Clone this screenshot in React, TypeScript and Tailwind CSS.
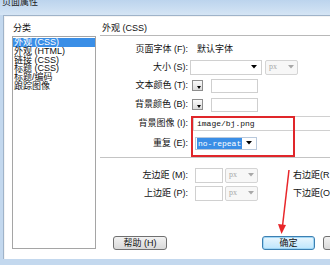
const Arrow = ({ gray }: { gray?: boolean }) => (
  <svg width="6" height="4" viewBox="0 0 6 4" className="shrink-0">
    <path d="M0 0 L6 0 L3 3.5 Z" fill={gray ? "#a8a8a8" : "#000"} />
  </svg>
);

const Swatch = () => (
  <div className="relative w-[11px] h-[11px] border border-[#8d8d8d] bg-gradient-to-b from-[#fafafa] to-[#dcdcdc]">
    <svg width="4" height="3" viewBox="0 0 4 3" className="absolute right-[1px] bottom-[1px]">
      <path d="M0 0 L4 0 L2 3 Z" fill="#000" />
    </svg>
  </div>
);

const PxSelect = () => (
  <div className="w-[33px] h-[15px] border border-[#d4d4d4] bg-[#f7f7f7] rounded-[2px] flex items-center justify-between px-[3px]">
    <span className="text-[8px] text-[#a8a8a8] font-['Liberation_Serif',serif]">px</span>
    <Arrow gray />
  </div>
);

const Row = ({ label, h, children }: { label: string; h: string; children: React.ReactNode }) => (
  <div className={`flex items-center ${h}`}>
    <div className="w-[88px] text-right whitespace-nowrap">{label}</div>
    {children}
  </div>
);

const Btn = ({ children, primary, className }: { children?: React.ReactNode; primary?: boolean; className?: string }) => (
  <div
    className={
      "h-[14px] rounded-[3px] border flex items-center justify-center shrink-0 " +
      (primary
        ? "border-[#3c7fb1] bg-gradient-to-b from-[#eaf6fd] to-[#bee6fd] shadow-[inset_0_0_0_1px_#9fd6f5] "
        : "border-[#707070] bg-gradient-to-b from-[#f2f2f2] to-[#d9d9d9] ") +
      (className ?? "")
    }
  >
    {children}
  </div>
);

export default function App() {
  const items = ["外观 (CSS)", "外观 (HTML)", "链接 (CSS)", "标题 (CSS)", "标题/编码", "跟踪图像"];
  return (
    <div className="relative w-[330px] h-[265px] overflow-hidden bg-[#c3d8ee] flex flex-col text-[9px] leading-none text-[#111] font-['Liberation_Sans','Noto_Sans_CJK_SC',sans-serif]">
      {/* title bar */}
      <div className="h-[15px] shrink-0 bg-gradient-to-b from-[#bcd4ed] to-[#d5e5f5] pl-[2px] overflow-hidden">
        <div className="text-[9px] leading-none -mt-[2px] text-[#1c1c1c]">页面属性</div>
      </div>

      {/* body */}
      <div className="flex ml-[3px] h-[244px] bg-white border-t border-l border-[#9fb3c9] shadow-[inset_1px_1px_0_#f4f4f4]">
        {/* categories */}
        <div className="w-[96px] shrink-0 pl-[8px] pt-[6px] flex flex-col">
          <div className="h-[12px] flex items-center pl-[1px]">分类</div>
          <div className="mt-[2px] w-[84px] h-[213px] border border-[#a5a5a5] pt-[1px]">
            {items.map((t, i) => (
              <div
                key={t}
                className={
                  "h-[8.8px] leading-[9px] pl-[1px] whitespace-nowrap " +
                  (i === 0 ? "bg-[#3a8ee6] text-white" : "")
                }
              >
                {t}
              </div>
            ))}
          </div>
        </div>

        {/* settings */}
        <div className="flex-1 flex flex-col pt-[6px]">
          <div className="h-[12px] flex items-center pl-[2px]">外观 (CSS)</div>
          <div className="mt-[1px] h-px bg-[#b8b8b8]" />
          <div className="mt-[4px] flex flex-col">
            <Row label="页面字体 (F):" h="h-[18px]">
              <span className="ml-[9px] whitespace-nowrap">默认字体</span>
            </Row>
            <Row label="大小 (S):" h="h-[18px]">
              <div className="ml-[2px] w-[72px] h-[15px] border border-[#d0d0d0] bg-white flex items-center justify-end pr-[4px]">
                <Arrow />
              </div>
              <div className="ml-[3px]">
                <PxSelect />
              </div>
            </Row>
            <Row label="文本颜色 (T):" h="h-[19px]">
              <div className="ml-[4px]">
                <Swatch />
              </div>
              <div className="ml-[8px] w-[47px] h-[14px] border border-[#cfcfcf] bg-white" />
            </Row>
            <Row label="背景颜色 (B):" h="h-[19px]">
              <div className="ml-[4px]">
                <Swatch />
              </div>
              <div className="ml-[8px] w-[47px] h-[14px] border border-[#cfcfcf] bg-white" />
            </Row>
            <Row label="背景图像 (I):" h="h-[19px]">
              <div className="ml-[5px] flex-1 h-[15px] border border-[#d0d0d0] bg-white flex items-center pl-[3px]">
                <span className="font-['Liberation_Mono',monospace] text-[8px]">image/bj.png</span>
              </div>
            </Row>
            <Row label="重复 (E):" h="h-[20px]">
              <div className="ml-[7px] w-[62px] h-[13px] border border-[#b9c9dc] bg-white flex items-center justify-between pl-[1px] pr-[4px]">
                <span className="bg-[#3a8ee6] text-white font-['Liberation_Mono',monospace] text-[8px] px-[1px] leading-[11px]">
                  no-repeat
                </span>
                <Arrow />
              </div>
            </Row>
          </div>
          <div className="mt-[4px] h-px bg-[#c4c4c4]" />
          <div className="mt-[8px] flex flex-col">
            <Row label="左边距 (M):" h="h-[18px]">
              <div className="ml-[7px] w-[28px] h-[15px] border border-[#d0d0d0] bg-white" />
              <div className="ml-[2px]">
                <PxSelect />
              </div>
              <span className="ml-[35px] whitespace-nowrap">右边距(R</span>
            </Row>
            <Row label="上边距 (P):" h="h-[18px]">
              <div className="ml-[7px] w-[28px] h-[15px] border border-[#d0d0d0] bg-white" />
              <div className="ml-[2px]">
                <PxSelect />
              </div>
              <span className="ml-[35px] whitespace-nowrap">下边距(O</span>
            </Row>
          </div>
          <div className="mt-[34px] flex">
            <Btn className="ml-[13px] w-[54px]">帮助 (H)</Btn>
            <Btn primary className="ml-[95px] w-[53px]">确定</Btn>
            <Btn className="ml-[8px] w-[30px]" />
          </div>
        </div>
      </div>

      {/* annotations */}
      <div className="absolute left-[191px] top-[116px] w-[104px] h-[41px] border-2 border-[#e0262a]" />
      <svg className="absolute left-0 top-0" width="330" height="265" viewBox="0 0 330 265">
        <path d="M289 170 L282.5 226" stroke="#e8262a" strokeWidth="1.5" fill="none" />
        <path d="M278 224 L286 225 L281.5 234 Z" fill="#e8262a" />
      </svg>
    </div>
  );
}
